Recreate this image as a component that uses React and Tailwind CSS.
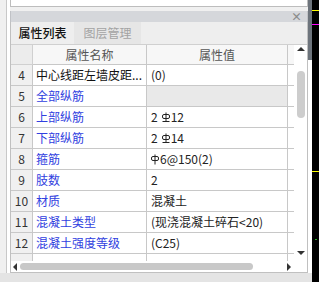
import React from 'react';

// 钢筋符号（三级钢带底横线）
const Rebar = ({ bar }) => (
  <svg width="8" height="11" viewBox="0 0 8 11" className={`inline-block align-[-1px] ${bar ? 'ml-[4px] mr-[1px]' : 'mr-[1px]'}`}>
    <line x1="4" y1="0.5" x2="4" y2={bar ? 9.5 : 10.5} stroke="#222" strokeWidth="1" />
    <rect x="0.5" y="2.5" width="7" height="4" rx="1.5" fill="none" stroke="#222" strokeWidth="1" />
    {bar && <line x1="0.5" y1="9.5" x2="7.5" y2="9.5" stroke="#222" strokeWidth="1" />}
  </svg>
);

const rows = [
  { n: 4, name: '中心线距左墙皮距...', value: '(0)', plain: true },
  { n: 5, name: '全部纵筋', value: '', group: true },
  { n: 6, name: '上部纵筋', value: <>2<Rebar bar />12</> },
  { n: 7, name: '下部纵筋', value: <>2<Rebar bar />14</> },
  { n: 8, name: '箍筋', value: <><Rebar />6@150(2)</> },
  { n: 9, name: '肢数', value: '2' },
  { n: 10, name: '材质', value: '混凝土' },
  { n: 11, name: '混凝土类型', value: '(现浇混凝土碎石<20)' },
  { n: 12, name: '混凝土强度等级', value: '(C25)' },
];

const Row = ({ r }) => (
  <div className="flex h-[21px] shrink-0">
    <div className="w-[22px] flex items-center justify-center bg-[#f0f0f0] border-r border-b border-[#c8c8c8] text-[#333]">{r.n}</div>
    <div className={`w-[114px] flex items-center pl-[3px] bg-white border-r border-b border-[#c8c8c8] whitespace-nowrap overflow-hidden ${r.plain ? 'text-[#111]' : 'text-[#3040e0]'}`}>{r.name}</div>
    <div className={`w-[141px] flex items-center pl-[4px] border-r border-b border-[#c8c8c8] whitespace-nowrap overflow-hidden text-[#222] ${r.group ? 'bg-[#e9e9e9]' : 'bg-white'}`}>{r.value}</div>
    <div className="w-[6px] bg-white border-b border-[#c8c8c8]" />
  </div>
);

export default function App() {
  return (
    <div className="w-[319px] h-[282px] flex bg-black overflow-hidden text-xs [font-family:'Noto_Sans_CJK_SC','Noto_Sans',sans-serif]">
      <div className="w-[312px] flex flex-col">
        <div className="h-[273px] flex">
          {/* left margin */}
          <div className="w-[10px] flex">
            <div className="w-[6px] bg-[#f0f0f0]" />
            <div className="w-[4px] bg-white border-l border-[#c8c8c8]" />
          </div>

          {/* panel */}
          <div className="w-[298px] flex flex-col bg-[#f0f0f0]">
            <div className="h-[7px] bg-white border-l border-r border-b border-[#bdbdbd]" />
            <div className="h-[4px]" />
            <div className="h-[11px] flex items-center justify-end pr-[5px] bg-[#d5d7db] border-l border-r border-[#c0c2c6]">
              <span className="text-[11px] leading-none font-bold text-[#8a8a8a]">×</span>
            </div>

            <div className="flex-1 flex flex-col border-l border-r border-b border-[#c0c0c0]">
              {/* tabs */}
              <div className="h-[23px] flex bg-[#eeeeee] border-b border-[#d0d0d0]">
                <div className="w-[63px] flex items-center justify-center font-medium text-[#111]">属性列表</div>
                <div className="w-[67px] flex items-center justify-center bg-[#e6e6e6] text-[#a3a3a3]">图层管理</div>
              </div>

              <div className="h-[216px] flex bg-white">
                <div className="w-[283px] flex flex-col overflow-hidden">
                  {/* header */}
                  <div className="flex h-[20px] shrink-0">
                    <div className="w-[22px] bg-[#ececec] border-b border-r border-[#d0d0d0]" />
                    <div className="w-[114px] flex items-center justify-center bg-[#f7f7f7] border-r border-b border-[#c8c8c8] text-[#555]">属性名称</div>
                    <div className="w-[141px] flex items-center justify-center bg-[#f7f7f7] border-r border-b border-[#c8c8c8] text-[#555]">属性值</div>
                    <div className="w-[6px] bg-[#f7f7f7] border-b border-[#c8c8c8]" />
                  </div>
                  {rows.map(r => <Row key={r.n} r={r} />)}
                  <div className="flex flex-1">
                    <div className="w-[22px] bg-[#f0f0f0] border-r border-[#c8c8c8]" />
                    <div className="w-[114px] border-r border-[#c8c8c8]" />
                    <div className="w-[141px] border-r border-[#c8c8c8]" />
                  </div>
                </div>
                {/* vertical scrollbar */}
                <div className="w-[13px] flex flex-col items-center">
                  <div className="mt-[2px] w-0 h-0 border-l-[4px] border-r-[4px] border-b-[4px] border-l-transparent border-r-transparent border-b-[#333]" />
                  <div className="mt-[20px] w-[8px] h-[47px] rounded-full bg-[#cdcdcd]" />
                  <div className="mt-auto mb-[6px] w-0 h-0 border-l-[4px] border-r-[4px] border-t-[4px] border-l-transparent border-r-transparent border-t-[#333]" />
                </div>
              </div>

              {/* horizontal scrollbar */}
              <div className="flex-1 flex items-center bg-white">
                <div className="ml-[2px] w-0 h-0 border-t-[4px] border-b-[4px] border-r-[4px] border-t-transparent border-b-transparent border-r-[#333]" />
                <div className="ml-[3px] w-[233px] h-[7px] rounded-full bg-[#c8c8c8]" />
                <div className="ml-[34px] w-0 h-0 border-t-[4px] border-b-[4px] border-l-[4px] border-t-transparent border-b-transparent border-l-[#333]" />
              </div>
            </div>
          </div>

          {/* right strip */}
          <div className="w-[4px] flex flex-col bg-white">
            <div className="h-[60px] bg-[#6d747c]" />
          </div>
        </div>
        <div className="flex-1 bg-[#e4e4e4]" />
      </div>

      {/* black canvas edge */}
      <div className="w-[7px] flex flex-col">
        <div className="h-[10px]" />
        <div className="h-[1px] bg-[#ffff00]" />
        <div className="h-[13px]" />
        <div className="h-[1px] bg-[#ff00ff]" />
        <div className="h-[146px]" />
        <div className="h-[1px] bg-[#ffff00]" />
        <div className="h-[67px]" />
        <div className="ml-[3px] w-[2px] h-[1px] bg-[#22aa22]" />
      </div>
    </div>
  );
}
